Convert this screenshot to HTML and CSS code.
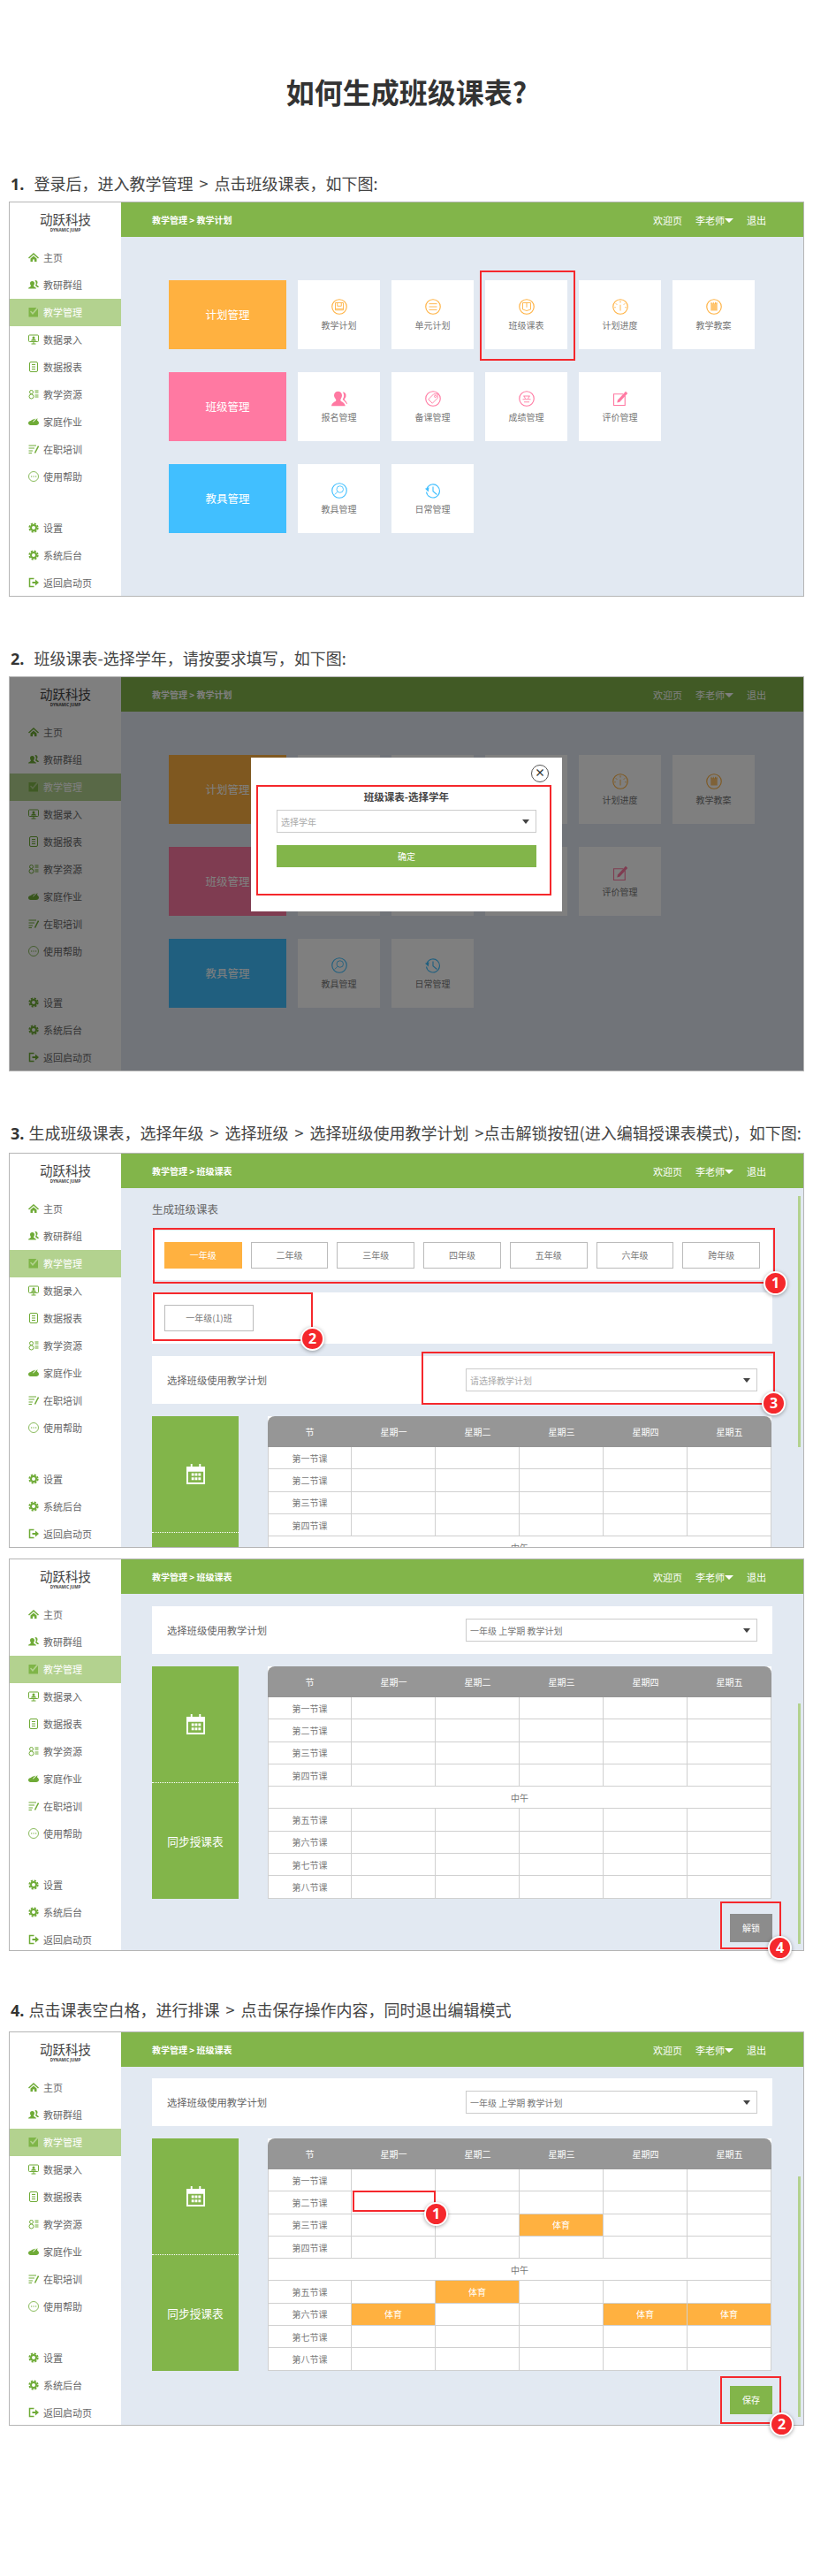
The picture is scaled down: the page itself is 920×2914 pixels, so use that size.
FILE: index.html
```html
<!DOCTYPE html>
<html lang="zh-CN">
<head>
	<meta charset="UTF-8">
	<title>如何生成班级课表?</title>
	<link rel="stylesheet" href="styles.css">
</head>
<body>

<!-- icons -->
<svg class="defs" width="0" height="0">
	<symbol id="i-home" viewBox="0 0 24 24"><path fill="currentColor" d="M12 2 24 13l-2 2L12 6 2 15l-2-2zM5 15l7-6 7 6v7h-5v-5h-4v5H5z"/></symbol>
	<symbol id="i-group" viewBox="0 0 24 24"><path fill="currentColor" d="M9 4a5 5 0 0 1 5 5c0 3-2 5-2 6 0 2 5 2 6 6H0c1-4 6-4 6-6 0-1-2-3-2-6a5 5 0 0 1 5-5zM16 2a5 5 0 0 1 5 5c0 3-2 4-2 5 1 2 4 2 5 6h-4c-1-2-4-3-4-4 2-3 2-8-1-11z"/></symbol>
	<symbol id="i-edit" viewBox="0 0 24 24"><path fill="currentColor" d="M1 2h18l-9 11-4-4-2 2 6 7L22 4v19H1z"/></symbol>
	<symbol id="i-screen" viewBox="0 0 24 24"><g fill="none" stroke="currentColor" stroke-width="2"><rect x="1" y="2" width="22" height="15" rx="2"/><path d="M7 22h10M12 17v5"/></g><circle cx="12" cy="8" r="3" fill="currentColor"/><path fill="currentColor" d="M6 15c1-3 3-4 6-4s5 1 6 4z"/></symbol>
	<symbol id="i-doc" viewBox="0 0 24 24"><rect x="3" y="1" width="18" height="22" rx="3" fill="none" stroke="currentColor" stroke-width="2"/><path stroke="currentColor" stroke-width="2" d="M8 7h8M8 12h8M8 17h8"/></symbol>
	<symbol id="i-res" viewBox="0 0 24 24"><g fill="none" stroke="currentColor" stroke-width="2"><circle cx="7" cy="7" r="4"/><circle cx="7" cy="17" r="5"/></g><path stroke="currentColor" stroke-width="2" d="M15 4h8M15 8h8M15 14h8M15 18h8"/></symbol>
	<symbol id="i-cloud" viewBox="0 0 24 24"><path fill="currentColor" d="M6 10c2-3 8-4 11-5L10 12l1 1 10-9-1 5c2 1 4 3 4 6 0 3-3 5-6 5H5c-3 0-5-2-5-5s3-5 6-5z"/></symbol>
	<symbol id="i-train" viewBox="0 0 24 24"><path stroke="currentColor" stroke-width="2" d="M1 4h17M1 10h13M1 16h9M1 21h7"/><path stroke="currentColor" stroke-width="3" d="M23 5 15 21"/></symbol>
	<symbol id="i-chat" viewBox="0 0 24 24"><circle cx="12" cy="12" r="11" fill="none" stroke="currentColor" stroke-width="1.6"/><path fill="currentColor" d="M6 11h2.500v2H6zM11 11h2.500v2H11zM16 11h2.500v2H16z"/></symbol>
	<symbol id="i-gear" viewBox="0 0 24 24"><g fill="none" stroke="currentColor"><circle cx="12" cy="12" r="6" stroke-width="4"/><circle cx="12" cy="12" r="9.500" stroke-width="3.500" stroke-dasharray="4.460 3"/></g></symbol>
	<symbol id="i-exit" viewBox="0 0 24 24"><path fill="none" stroke="currentColor" stroke-width="3" d="M13 3H3v18h10"/><path fill="currentColor" d="M9 10h7V5l8 7-8 7v-5H9z"/></symbol>

	<symbol id="t-plan" viewBox="0 0 24 24"><circle cx="12" cy="12" r="11" class="ring"/><path class="ink" d="M6 6h12v11H6zM9 6v5h6V6M6 15h12"/></symbol>
	<symbol id="t-unit" viewBox="0 0 24 24"><circle cx="12" cy="12" r="11" class="ring"/><path class="ink" stroke-width="2" d="M6 7.500h12M6 12h12M6 16.500h12"/></symbol>
	<symbol id="t-class" viewBox="0 0 24 24"><circle cx="12" cy="12" r="11" class="ring"/><path class="ink" d="M6 6h12v10l-6 2-6-2zM12 6v7"/></symbol>
	<symbol id="t-gauge" viewBox="0 0 24 24"><circle cx="12" cy="12" r="11" class="ring"/><path class="ink" d="M12 3v3M5 7l2 2M19 7l-2 2M3 13h2M21 13h-2"/><path class="ink" stroke-width="2" d="M12 9v9"/></symbol>
	<symbol id="t-note" viewBox="0 0 24 24"><circle cx="12" cy="12" r="11" class="ring"/><path fill="currentColor" fill-opacity=".75" d="M7 7h10v11H7z"/><path class="ink" d="M8 5v3M11 5v3M14 5v3M16 5v3"/></symbol>
	<symbol id="t-people" viewBox="0 0 24 24"><path fill="currentColor" d="M10 1a6 6 0 0 1 6 6c0 4-3 6-2 8s6 2 7 8H0c1-6 6-6 7-8S4 11 4 7a6 6 0 0 1 6-6zM17 2a5 5 0 0 1 5 6c0 3-3 4-2 6 1 1 3 2 4 6h-1c-2-4-5-5-6-7 2-3 3-7 0-11z"/></symbol>
	<symbol id="t-tag" viewBox="0 0 24 24"><circle cx="12" cy="12" r="11" class="ring"/><path class="ink" d="M13 5h6v6l-8 8-6-6z"/><circle cx="15.500" cy="8.500" r="1.500" class="ink"/></symbol>
	<symbol id="t-score" viewBox="0 0 24 24"><circle cx="12" cy="12" r="11" class="ring"/><path class="ink" d="M7 8h10M8 8l2 4M16 8l-2 4M6 13h12M8 17h8"/></symbol>
	<symbol id="t-pen" viewBox="0 0 24 24"><path fill="none" stroke="currentColor" stroke-width="1.500" d="M19 8v14H2V5h14"/><path fill="currentColor" d="m20 1 3 3L11 17l-4 1 1-4z"/></symbol>
	<symbol id="t-racket" viewBox="0 0 24 24"><circle cx="12" cy="12" r="11" class="ring"/><circle cx="13" cy="10" r="5" class="ink"/><path class="ink" stroke-width="1.500" d="m9 14-4 4"/></symbol>
	<symbol id="t-clock" viewBox="0 0 24 24"><path fill="none" stroke="currentColor" stroke-width="1.500" d="M3 8a10 10 0 1 1-1 6M12 6v7l6 5"/><path fill="currentColor" d="m0 9 6-2-1 7z"/></symbol>

	<symbol id="i-cal" viewBox="0 0 24 24"><path fill="#fff" d="M6 0h2v3h8V0h2v3h5v21H1V3h5zM3 9v13h18V9zM7 11h3v3H7zM11 11h3v3h-3zM15 11h3v3h-3zM7 16h3v3H7zM11 16h3v3h-3zM15 16h3v3h-3z"/></symbol>
</svg>

<h1 class="title">如何生成班级课表?</h1>

<h2 class="step step1"><b>1.</b>登录后，进入教学管理 &gt; 点击班级课表，如下图:</h2>
<div class="shot">
	<div class="side">
		<div class="logo"><span>动跃科技</span><small>DYNAMIC JUMP</small></div>
		<a><svg><use href="#i-home"/></svg>主页</a>
		<a><svg><use href="#i-group"/></svg>教研群组</a>
		<a class="on"><svg><use href="#i-edit"/></svg>教学管理</a>
		<a><svg><use href="#i-screen"/></svg>数据录入</a>
		<a><svg><use href="#i-doc"/></svg>数据报表</a>
		<a><svg><use href="#i-res"/></svg>教学资源</a>
		<a><svg><use href="#i-cloud"/></svg>家庭作业</a>
		<a><svg><use href="#i-train"/></svg>在职培训</a>
		<a><svg><use href="#i-chat"/></svg>使用帮助</a>
		<a class="gap"><svg><use href="#i-gear"/></svg>设置</a>
		<a><svg><use href="#i-gear"/></svg>系统后台</a>
		<a><svg><use href="#i-exit"/></svg>返回启动页</a>
	</div>
	<div class="main">
		<div class="top"><b>教学管理 &gt; 教学计划</b><span>欢迎页</span><span>李老师<i></i></span><span>退出</span></div>
		<div class="menu">
			<div class="row orange">
				<div class="big">计划管理</div>
				<div class="tile"><svg><use href="#t-plan"/></svg>教学计划</div>
				<div class="tile"><svg><use href="#t-unit"/></svg>单元计划</div>
				<div class="tile"><svg><use href="#t-class"/></svg>班级课表</div>
				<div class="tile"><svg><use href="#t-gauge"/></svg>计划进度</div>
				<div class="tile"><svg><use href="#t-note"/></svg>教学教案</div>
			</div>
			<div class="row pink">
				<div class="big">班级管理</div>
				<div class="tile"><svg><use href="#t-people"/></svg>报名管理</div>
				<div class="tile"><svg><use href="#t-tag"/></svg>备课管理</div>
				<div class="tile"><svg><use href="#t-score"/></svg>成绩管理</div>
				<div class="tile"><svg><use href="#t-pen"/></svg>评价管理</div>
			</div>
			<div class="row blue">
				<div class="big">教具管理</div>
				<div class="tile"><svg><use href="#t-racket"/></svg>教具管理</div>
				<div class="tile"><svg><use href="#t-clock"/></svg>日常管理</div>
			</div>
		</div>
	</div>
	<div class="mark m-tile"></div>
</div>

<h2 class="step step2"><b>2.</b>班级课表-选择学年，请按要求填写，如下图:</h2>
<div class="shot">
	<div class="side">
		<div class="logo"><span>动跃科技</span><small>DYNAMIC JUMP</small></div>
		<a><svg><use href="#i-home"/></svg>主页</a>
		<a><svg><use href="#i-group"/></svg>教研群组</a>
		<a class="on"><svg><use href="#i-edit"/></svg>教学管理</a>
		<a><svg><use href="#i-screen"/></svg>数据录入</a>
		<a><svg><use href="#i-doc"/></svg>数据报表</a>
		<a><svg><use href="#i-res"/></svg>教学资源</a>
		<a><svg><use href="#i-cloud"/></svg>家庭作业</a>
		<a><svg><use href="#i-train"/></svg>在职培训</a>
		<a><svg><use href="#i-chat"/></svg>使用帮助</a>
		<a class="gap"><svg><use href="#i-gear"/></svg>设置</a>
		<a><svg><use href="#i-gear"/></svg>系统后台</a>
		<a><svg><use href="#i-exit"/></svg>返回启动页</a>
	</div>
	<div class="main">
		<div class="top"><b>教学管理 &gt; 教学计划</b><span>欢迎页</span><span>李老师<i></i></span><span>退出</span></div>
		<div class="menu">
			<div class="row orange">
				<div class="big">计划管理</div>
				<div class="tile"><svg><use href="#t-plan"/></svg>教学计划</div>
				<div class="tile"><svg><use href="#t-unit"/></svg>单元计划</div>
				<div class="tile"><svg><use href="#t-class"/></svg>班级课表</div>
				<div class="tile"><svg><use href="#t-gauge"/></svg>计划进度</div>
				<div class="tile"><svg><use href="#t-note"/></svg>教学教案</div>
			</div>
			<div class="row pink">
				<div class="big">班级管理</div>
				<div class="tile"><svg><use href="#t-people"/></svg>报名管理</div>
				<div class="tile"><svg><use href="#t-tag"/></svg>备课管理</div>
				<div class="tile"><svg><use href="#t-score"/></svg>成绩管理</div>
				<div class="tile"><svg><use href="#t-pen"/></svg>评价管理</div>
			</div>
			<div class="row blue">
				<div class="big">教具管理</div>
				<div class="tile"><svg><use href="#t-racket"/></svg>教具管理</div>
				<div class="tile"><svg><use href="#t-clock"/></svg>日常管理</div>
			</div>
		</div>
	</div>
	<div class="mask"></div>
	<div class="modal">
		<div class="close">×</div>
		<div class="modal-title">班级课表-选择学年</div>
		<div class="select modal-select"><span>选择学年</span><i></i></div>
		<div class="ok">确定</div>
		<div class="mark m-modal"></div>
	</div>
</div>

<h2 class="step step3"><b>3.</b>生成班级课表，选择年级 &gt; 选择班级 &gt; 选择班级使用教学计划 &gt;点击解锁按钮(进入编辑授课表模式)，如下图:</h2>
<div class="shot">
	<div class="side">
		<div class="logo"><span>动跃科技</span><small>DYNAMIC JUMP</small></div>
		<a><svg><use href="#i-home"/></svg>主页</a>
		<a><svg><use href="#i-group"/></svg>教研群组</a>
		<a class="on"><svg><use href="#i-edit"/></svg>教学管理</a>
		<a><svg><use href="#i-screen"/></svg>数据录入</a>
		<a><svg><use href="#i-doc"/></svg>数据报表</a>
		<a><svg><use href="#i-res"/></svg>教学资源</a>
		<a><svg><use href="#i-cloud"/></svg>家庭作业</a>
		<a><svg><use href="#i-train"/></svg>在职培训</a>
		<a><svg><use href="#i-chat"/></svg>使用帮助</a>
		<a class="gap"><svg><use href="#i-gear"/></svg>设置</a>
		<a><svg><use href="#i-gear"/></svg>系统后台</a>
		<a><svg><use href="#i-exit"/></svg>返回启动页</a>
	</div>
	<div class="main">
		<div class="top"><b>教学管理 &gt; 班级课表</b><span>欢迎页</span><span>李老师<i></i></span><span>退出</span></div>
		<div class="body body-pick">
			<div class="page-title">生成班级课表</div>
			<div class="grades">
				<div class="btn cur">一年级</div>
				<div class="btn">二年级</div>
				<div class="btn">三年级</div>
				<div class="btn">四年级</div>
				<div class="btn">五年级</div>
				<div class="btn">六年级</div>
				<div class="btn">跨年级</div>
			</div>
			<div class="classes"><div class="btn">一年级(1)班</div></div>
			<div class="plan">
				<span>选择班级使用教学计划</span>
				<div class="select"><span>请选择教学计划</span><i></i></div>
			</div>
			<div class="sched">
				<div class="sync">
					<div><svg><use href="#i-cal"/></svg></div>
					<div></div>
				</div>
				<table>
					<tr><th>节</th><th>星期一</th><th>星期二</th><th>星期三</th><th>星期四</th><th>星期五</th></tr>
					<tr><td>第一节课</td><td></td><td></td><td></td><td></td><td></td></tr>
					<tr><td>第二节课</td><td></td><td></td><td></td><td></td><td></td></tr>
					<tr><td>第三节课</td><td></td><td></td><td></td><td></td><td></td></tr>
					<tr><td>第四节课</td><td></td><td></td><td></td><td></td><td></td></tr>
					<tr><td colspan="6">中午</td></tr>
				</table>
			</div>
		</div>
		<div class="bar bar-pick"></div>
	</div>
	<div class="mark m-grades"></div>
	<div class="mark m-classes"></div>
	<div class="mark m-plan"></div>
	<div class="num n-grades">1</div>
	<div class="num n-classes">2</div>
	<div class="num n-plan">3</div>
</div>

<div class="shot shot4">
	<div class="side">
		<div class="logo"><span>动跃科技</span><small>DYNAMIC JUMP</small></div>
		<a><svg><use href="#i-home"/></svg>主页</a>
		<a><svg><use href="#i-group"/></svg>教研群组</a>
		<a class="on"><svg><use href="#i-edit"/></svg>教学管理</a>
		<a><svg><use href="#i-screen"/></svg>数据录入</a>
		<a><svg><use href="#i-doc"/></svg>数据报表</a>
		<a><svg><use href="#i-res"/></svg>教学资源</a>
		<a><svg><use href="#i-cloud"/></svg>家庭作业</a>
		<a><svg><use href="#i-train"/></svg>在职培训</a>
		<a><svg><use href="#i-chat"/></svg>使用帮助</a>
		<a class="gap"><svg><use href="#i-gear"/></svg>设置</a>
		<a><svg><use href="#i-gear"/></svg>系统后台</a>
		<a><svg><use href="#i-exit"/></svg>返回启动页</a>
	</div>
	<div class="main">
		<div class="top"><b>教学管理 &gt; 班级课表</b><span>欢迎页</span><span>李老师<i></i></span><span>退出</span></div>
		<div class="body">
			<div class="plan">
				<span>选择班级使用教学计划</span>
				<div class="select filled"><span>一年级 上学期 教学计划</span><i></i></div>
			</div>
			<div class="sched">
				<div class="sync">
					<div><svg><use href="#i-cal"/></svg></div>
					<div>同步授课表</div>
				</div>
				<table>
					<tr><th>节</th><th>星期一</th><th>星期二</th><th>星期三</th><th>星期四</th><th>星期五</th></tr>
					<tr><td>第一节课</td><td></td><td></td><td></td><td></td><td></td></tr>
					<tr><td>第二节课</td><td></td><td></td><td></td><td></td><td></td></tr>
					<tr><td>第三节课</td><td></td><td></td><td></td><td></td><td></td></tr>
					<tr><td>第四节课</td><td></td><td></td><td></td><td></td><td></td></tr>
					<tr><td colspan="6">中午</td></tr>
					<tr><td>第五节课</td><td></td><td></td><td></td><td></td><td></td></tr>
					<tr><td>第六节课</td><td></td><td></td><td></td><td></td><td></td></tr>
					<tr><td>第七节课</td><td></td><td></td><td></td><td></td><td></td></tr>
					<tr><td>第八节课</td><td></td><td></td><td></td><td></td><td></td></tr>
				</table>
			</div>
			<div class="actions"><div class="act grey">解锁</div></div>
		</div>
		<div class="bar bar-edit"></div>
	</div>
	<div class="mark m-act4"></div>
	<div class="num n-act4">4</div>
</div>

<h2 class="step step4"><b>4.</b>点击课表空白格，进行排课 &gt; 点击保存操作内容，同时退出编辑模式</h2>
<div class="shot shot5">
	<div class="side">
		<div class="logo"><span>动跃科技</span><small>DYNAMIC JUMP</small></div>
		<a><svg><use href="#i-home"/></svg>主页</a>
		<a><svg><use href="#i-group"/></svg>教研群组</a>
		<a class="on"><svg><use href="#i-edit"/></svg>教学管理</a>
		<a><svg><use href="#i-screen"/></svg>数据录入</a>
		<a><svg><use href="#i-doc"/></svg>数据报表</a>
		<a><svg><use href="#i-res"/></svg>教学资源</a>
		<a><svg><use href="#i-cloud"/></svg>家庭作业</a>
		<a><svg><use href="#i-train"/></svg>在职培训</a>
		<a><svg><use href="#i-chat"/></svg>使用帮助</a>
		<a class="gap"><svg><use href="#i-gear"/></svg>设置</a>
		<a><svg><use href="#i-gear"/></svg>系统后台</a>
		<a><svg><use href="#i-exit"/></svg>返回启动页</a>
	</div>
	<div class="main">
		<div class="top"><b>教学管理 &gt; 班级课表</b><span>欢迎页</span><span>李老师<i></i></span><span>退出</span></div>
		<div class="body">
			<div class="plan">
				<span>选择班级使用教学计划</span>
				<div class="select filled"><span>一年级 上学期 教学计划</span><i></i></div>
			</div>
			<div class="sched">
				<div class="sync">
					<div><svg><use href="#i-cal"/></svg></div>
					<div>同步授课表</div>
				</div>
				<table>
					<tr><th>节</th><th>星期一</th><th>星期二</th><th>星期三</th><th>星期四</th><th>星期五</th></tr>
					<tr><td>第一节课</td><td></td><td></td><td></td><td></td><td></td></tr>
					<tr><td>第二节课</td><td></td><td></td><td></td><td></td><td></td></tr>
					<tr><td>第三节课</td><td></td><td></td><td class="pe">体育</td><td></td><td></td></tr>
					<tr><td>第四节课</td><td></td><td></td><td></td><td></td><td></td></tr>
					<tr><td colspan="6">中午</td></tr>
					<tr><td>第五节课</td><td></td><td class="pe">体育</td><td></td><td></td><td></td></tr>
					<tr><td>第六节课</td><td class="pe">体育</td><td></td><td></td><td class="pe">体育</td><td class="pe">体育</td></tr>
					<tr><td>第七节课</td><td></td><td></td><td></td><td></td><td></td></tr>
					<tr><td>第八节课</td><td></td><td></td><td></td><td></td><td></td></tr>
				</table>
			</div>
			<div class="actions"><div class="act">保存</div></div>
		</div>
		<div class="bar bar-edit"></div>
	</div>
	<div class="mark m-cell"></div>
	<div class="mark m-act5"></div>
	<div class="num n-cell">1</div>
	<div class="num n-act5">2</div>
</div>

</body>
</html>
```

FILE: styles.css
```css
:root {
	--green: #82b54a;
	--light: #b3d28f;
	--bg: #e2e9f2;
	--red: #f5282c;
	--orange: #ffb140;
	--pink: #ff79a2;
	--blue: #41bfff;
}

* {box-sizing: border-box;}

body {
	margin: 0;
	height: 2914px;
	background: #fff;
	color: #444;
	font-family: "Noto Sans CJK SC", "Open Sans", sans-serif;
}

.defs {position: absolute;}

.title {margin: 83px 0 0; height: 40px; line-height: 40px; text-align: center; font-size: 32px; font-weight: 700; color: #333;}

.step {margin: 0 0 8px; padding-left: 12px; height: 26px; line-height: 26px; font-size: 18px; font-weight: 400; color: #444; white-space: nowrap;}
.step b {margin-right: 11px; font-family: "Open Sans", sans-serif; font-weight: 700; color: #333;}
.step1 {margin-top: 71px; word-spacing: 3px;}
.step2 {margin-top: 56px;}
.step3 {margin-top: 56px; margin-bottom: 10px; word-spacing: 3px;}
.step3 b, .step4 b {margin-right: 5px;}
.step4 {margin-top: 53px; margin-bottom: 12px; word-spacing: 3px;}

/* the app screenshots */
.shot {position: relative; display: flex; margin-left: 10px; width: 900px; height: 447px; border: 1px solid #b5b5b5;}
.shot4 {margin-top: 12px; height: 444px;}
.shot5 {height: 446px;}

.side {flex: none; width: 126px; background: #fff; color: #666; font-size: 11px;}
.logo {display: flex; flex-direction: column; align-items: center; height: 47px; padding-top: 9px; color: #444;}
.logo span {font-size: 14.500px; line-height: 20px;}
.logo small {font-family: "Open Sans", sans-serif; font-size: 4.500px; line-height: 5px; font-weight: 700;}
.side a {display: flex; align-items: center; gap: 5px; height: 31px; padding-left: 21px; padding-bottom: 1px;}
.side svg {width: 12px; height: 12px; color: #6fab37;}
.side .on {background: var(--light); color: #fff;}
.side .on svg {color: #7fb548;}
.side .gap {margin-top: 27px;}

.main {position: relative; flex: 1; overflow: hidden; background: var(--bg);}
.top {display: flex; align-items: center; gap: 15px; height: 39px; padding: 0 42px 0 35px; background: var(--green); color: #fff; font-size: 11px;}
.top b {margin-right: auto; font-size: 10px;}
.top i {display: inline-block; margin-left: 0; border: 5px solid transparent; border-top-color: #fff; border-bottom: 0; vertical-align: 2px;}

.menu {padding: 49px 0 0 54px;}
.row {display: flex; gap: 13px; margin-bottom: 26px;}
.orange {color: var(--orange);}
.pink {color: var(--pink);}
.blue {color: var(--blue);}
.big {width: 133px; height: 78px; line-height: 78px; text-align: center; font-size: 12.500px; color: #fff;}
.orange .big {background: var(--orange);}
.pink .big {background: var(--pink);}
.blue .big {background: var(--blue);}
.tile {display: flex; flex-direction: column; align-items: center; width: 93px; height: 78px; padding-top: 21px; background: #fff; font-size: 10px; line-height: 14px; color: #777;}
.tile svg {width: 18px; height: 18px; margin-bottom: 5px;}
.orange .tile svg {color: var(--orange);}
.pink .tile svg {color: var(--pink);}
.blue .tile svg {color: var(--blue);}
.ring {fill: none; stroke: currentColor; stroke-width: 1.500;}
.ink {fill: none; stroke: currentColor; stroke-width: 1.200;}

/* dialog of step 2 */
.mask {position: absolute; left: 0; top: 0; right: 0; bottom: 0; background: rgba(0,0,0,0.5);}
.modal {position: absolute; left: 273px; top: 91px; width: 352px; height: 174px; padding: 34px 29px 0; background: #fff;}
.close {position: absolute; left: 317px; top: 8px; width: 20px; height: 20px; border: 1px solid #555; border-radius: 50%; line-height: 16px; text-align: center; font-size: 12px; font-weight: 700; color: #333;}
.modal-title {height: 20px; line-height: 20px; text-align: center; font-size: 11.500px; font-weight: 700; color: #444;}
.modal-select {margin-top: 5px;}
.ok {margin-top: 14px; height: 25px; line-height: 25px; text-align: center; background: var(--green); color: #fff; font-size: 10px;}

.select {display: flex; align-items: center; justify-content: space-between; width: 100%; height: 26px; padding: 0 7px 0 4px; background: #fff; border: 1px solid #ccc; font-size: 10px; color: #aaa;}
.select i {border: 4px solid transparent; border-top: 5px solid #444; border-bottom: 0;}
.filled {color: #777;}

/* timetable pages */
.body {padding: 14px 35px 0;}
.shot5 .body {padding-top: 13px;}
.body-pick {padding-top: 12px;}
.page-title {height: 24px; line-height: 24px; font-size: 12.500px; color: #666;}

.grades {display: grid; grid-template-columns: repeat(7, 1fr); gap: 10px; margin-top: 12px; height: 56px; padding: 13px 14px 0; background: #fff;}
.classes {margin-top: 14px; height: 58px; padding: 14px 14px 0; background: #fff;}
.btn {height: 30px; line-height: 27px; text-align: center; border: 1px solid #bbb; background: #fff; font-size: 10px; color: #777;}
.classes .btn {width: 101px;}
.cur {background: var(--orange); border-color: var(--orange); color: #fff;}

.plan {display: flex; align-items: center; justify-content: space-between; height: 54px; padding: 0 17px; background: #fff; font-size: 11.300px; color: #666;}
.plan .select {width: 330px;}
.body-pick .plan {margin-top: 14px;}

.sched {display: flex; gap: 33px; margin-top: 14px;}
.sync {flex: none; width: 98px; background: var(--green); color: #fff; font-size: 12.700px;}
.sync div {display: flex; align-items: center; justify-content: center; height: 131px;}
.sync div + div {height: 132px; border-top: 1px dotted #fff;}
.sync svg {width: 23px; height: 23px;}

table {flex: none; align-self: flex-start; width: 570px; border-collapse: separate; border-spacing: 0; table-layout: fixed; background: #fff; font-size: 10px; color: #777; text-align: center;}
th {height: 35px; padding: 0; background: #969696; color: #fff; font-weight: 400;}
th:first-child {border-top-left-radius: 8px;}
th:last-child {border-top-right-radius: 8px;}
td {height: 25.300px; padding: 0; border-right: 1px solid #d0d0d0; border-bottom: 1px solid #d0d0d0;}
td:first-child {border-left: 1px solid #d0d0d0;}
td.pe {background: var(--orange); color: #fff;}

.actions {display: flex; justify-content: flex-end; margin-top: 17px;}
.act {width: 48px; height: 32px; line-height: 32px; text-align: center; background: var(--green); color: #fff; font-size: 10px;}
.grey {background: #8c8c8c;}

.bar {position: absolute; left: 766px; width: 3px; background: var(--light);}
.bar-pick {top: 48px; height: 284px;}
.bar-edit {top: 163px; height: 272px;}

/* red marks and numbers laid over the screenshots */
.mark {position: absolute; border: 2px solid var(--red);}
.m-tile {left: 532px; top: 77px; width: 108px; height: 102px;}
.m-modal {left: 6px; top: 31px; width: 334px; height: 125px;}
.m-grades {left: 162px; top: 84px; width: 704px; height: 63px;}
.m-classes {left: 162px; top: 157px; width: 181px; height: 55px;}
.m-plan {left: 466px; top: 224px; width: 400px; height: 60px;}
.m-act4 {left: 804px; top: 387px; width: 69px; height: 54px;}
.m-cell {left: 388px; top: 179px; width: 94px; height: 24px;}
.m-act5 {left: 804px; top: 389px; width: 69px; height: 54px;}

.num {position: absolute; width: 27px; height: 27px; line-height: 23px; text-align: center; border: 2px solid #fff; border-radius: 50%; background: var(--red); color: #fff; font-family: "Open Sans", sans-serif; font-size: 16px; font-weight: 700; box-shadow: 0 1px 4px rgba(0,0,0,0.35);}
.n-grades {left: 853px; top: 133px;}
.n-classes {left: 329px; top: 196px;}
.n-plan {left: 851px; top: 269px;}
.n-act4 {left: 858px; top: 426px;}
.n-cell {left: 469px; top: 192px;}
.n-act5 {left: 860px; top: 430px;}
```
